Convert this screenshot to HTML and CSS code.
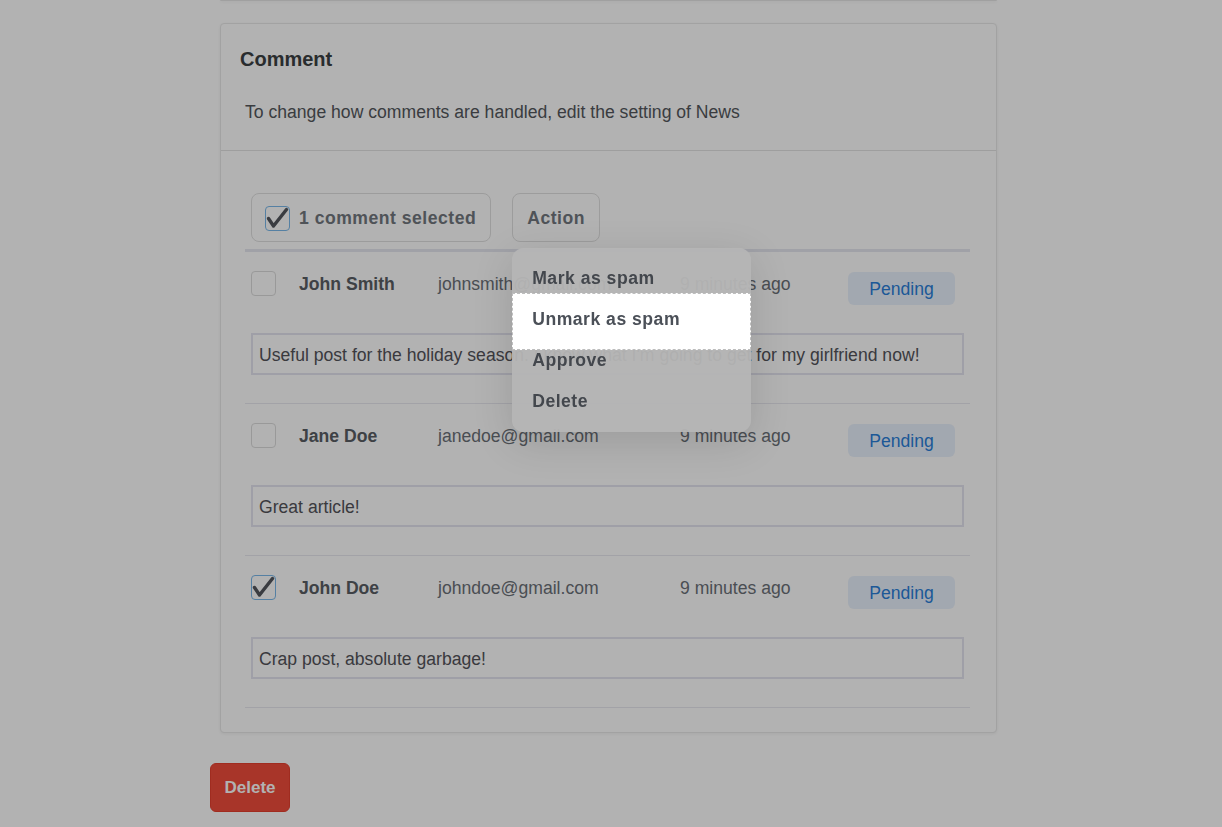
FILE: index.html
```html
<!DOCTYPE html>
<html lang="en">
<head>
<meta charset="utf-8">
<title>Comments</title>
<link rel="stylesheet" href="styles.css">
</head>
<body>
<div class="prev-card"></div>
<div class="page">
  <section class="card">
    <header class="card-head">
      <h2 class="title">Comment</h2>
      <p class="desc">To change how comments are handled, edit the setting of News</p>
    </header>
    <div class="card-body">
      <div class="toolbar">
        <button class="tbtn">
          <span class="cb checked"><svg viewBox="0 0 25 25" width="25" height="25"><path d="M3.5 12.5 L8.5 20 L21.5 3.5" fill="none" stroke="#53575e" stroke-width="3.4" stroke-linecap="round" stroke-linejoin="round"/></svg></span>
          1 comment selected
        </button>
        <div class="action-wrap">
          <button class="tbtn">Action</button>
          <ul class="menu">
            <li class="menu-item">Mark as spam</li>
            <li class="menu-item focus">Unmark as spam</li>
            <li class="menu-item">Approve</li>
            <li class="menu-item">Delete</li>
          </ul>
        </div>
      </div>

      <div class="row">
        <div class="row-head">
          <span class="cb"></span>
          <span class="name">John Smith</span>
          <span class="meta">johnsmith@gmail.com</span>
          <span class="meta">9 minutes ago</span>
          <span class="badge">Pending</span>
        </div>
        <div class="comment">Useful post for the holiday season. I know what I'm going to get for my girlfriend now!</div>
      </div>

      <div class="row">
        <div class="row-head">
          <span class="cb"></span>
          <span class="name">Jane Doe</span>
          <span class="meta">janedoe@gmail.com</span>
          <span class="meta">9 minutes ago</span>
          <span class="badge">Pending</span>
        </div>
        <div class="comment">Great article!</div>
      </div>

      <div class="row">
        <div class="row-head">
          <span class="cb checked"><svg viewBox="0 0 25 25" width="25" height="25"><path d="M3.5 12.5 L8.5 20 L21.5 3.5" fill="none" stroke="#53575e" stroke-width="3.4" stroke-linecap="round" stroke-linejoin="round"/></svg></span>
          <span class="name">John Doe</span>
          <span class="meta">johndoe@gmail.com</span>
          <span class="meta">9 minutes ago</span>
          <span class="badge">Pending</span>
        </div>
        <div class="comment">Crap post, absolute garbage!</div>
      </div>
    </div>
  </section>
  <button class="delete">Delete</button>
</div>
<div class="overlay"></div>
</body>
</html>
```

FILE: styles.css
```css
* { box-sizing: border-box; }

html, body {
  margin: 0;
  padding: 0;
  background: #ffffff;
  font-family: "Liberation Sans", Arial, sans-serif;
  font-size: 17.6px;
}

.prev-card {
  margin-left: 220px;
  width: 777px;
  height: 1px;
  border-bottom: 1px solid #e6e6e6;
  border-radius: 0 0 4px 4px;
  box-shadow: 0 1px 3px rgba(0, 0, 0, 0.08);
}

.page {
  margin-left: 210px;
  width: 797px;
  padding-bottom: 20px;
}

.card {
  margin: 22px 10px 0;
  border: 1px solid #e8e8e8;
  border-radius: 4px;
  background: #fff;
  box-shadow: 0 1px 3px rgba(0, 0, 0, 0.06);
}

.card-head {
  padding: 24px 19px 28px;
  border-bottom: 1px solid #e2e2e2;
}

.title {
  margin: 0;
  font-size: 20px;
  line-height: 22px;
  font-weight: bold;
  color: #3c3f43;
}

.desc {
  margin: 32px 0 0;
  padding-left: 5px;
  line-height: 20px;
  color: #53575c;
}

.card-body {
  padding: 42px 26px 24px 24px;
}

.toolbar {
  display: flex;
  gap: 21px;
  padding: 0 0 7px 6px;
  border-bottom: 3px solid #e6e7f0;
}

.tbtn {
  display: inline-flex;
  align-items: center;
  gap: 9px;
  height: 49px;
  padding: 1px 14px 0 13px;
  border: 1px solid #e0e0e0;
  border-radius: 8px;
  background: #fff;
  font-family: inherit;
  font-size: 17.6px;
  font-weight: bold;
  letter-spacing: 0.5px;
  color: #72777e;
}

.action-wrap {
  position: relative;
}

.action-wrap .tbtn {
  padding: 1px 14px 0;
}

.menu {
  position: absolute;
  top: calc(100% + 6px);
  left: 0;
  z-index: 20;
  width: 239px;
  margin: 0;
  padding: 10px 0 10px;
  list-style: none;
  border-radius: 12px;
  background: rgba(181, 181, 181, 0.95);
  box-shadow: 0 10px 40px rgba(0, 0, 0, 0.13);
}

.menu-item {
  position: relative;
  z-index: 0;
  padding: 0 20px;
  line-height: 41px;
  font-weight: bold;
  letter-spacing: 0.5px;
  color: #43474d;
}

.menu-item.focus {
  color: #4b5058;
}

.menu-item.focus::before {
  content: "";
  position: absolute;
  left: 0;
  right: 0;
  top: -6px;
  bottom: -10px;
  z-index: -1;
  background: #ffffff;
  border: 1px dashed #bdbdbd;
}

.cb {
  display: inline-block;
  width: 25px;
  height: 25px;
  border: 1px solid #dcdcdc;
  border-radius: 4px;
  background: #fff;
  position: relative;
  flex: none;
}

.cb svg {
  position: absolute;
  left: -1px;
  top: -1px;
}

.cb.checked {
  border-color: #7ab8ea;
}

.row {
  padding: 19px 6px 28px;
  border-bottom: 1px solid #e8e8ef;
}

.row-head {
  display: grid;
  grid-template-columns: 48px 139px 242px 168px 107px;
  align-items: start;
  height: 34px;
}

.name {
  line-height: 26px;
  font-weight: bold;
  color: #595d64;
}

.meta {
  line-height: 26px;
  color: #6b7077;
}

.badge {
  margin-top: 1px;
  height: 33px;
  padding-top: 2px;
  line-height: 31px;
  text-align: center;
  border-radius: 6px;
  background: #e9f1fc;
  color: #2a7fd9;
}

.comment {
  margin-top: 28px;
  height: 42px;
  padding: 2px 6px 0;
  line-height: 36px;
  border: 2px solid #e4e4ef;
  color: #53535a;
  white-space: nowrap;
}

.delete {
  margin-top: 30px;
  width: 80px;
  height: 49px;
  border: 1px solid #e5402e;
  border-radius: 6px;
  background: #f14c3c;
  color: #ffffff;
  font-family: inherit;
  font-size: 17px;
  font-weight: bold;
}

.overlay {
  position: fixed;
  inset: 0;
  z-index: 10;
  background: rgba(0, 0, 0, 0.3);
}
```
